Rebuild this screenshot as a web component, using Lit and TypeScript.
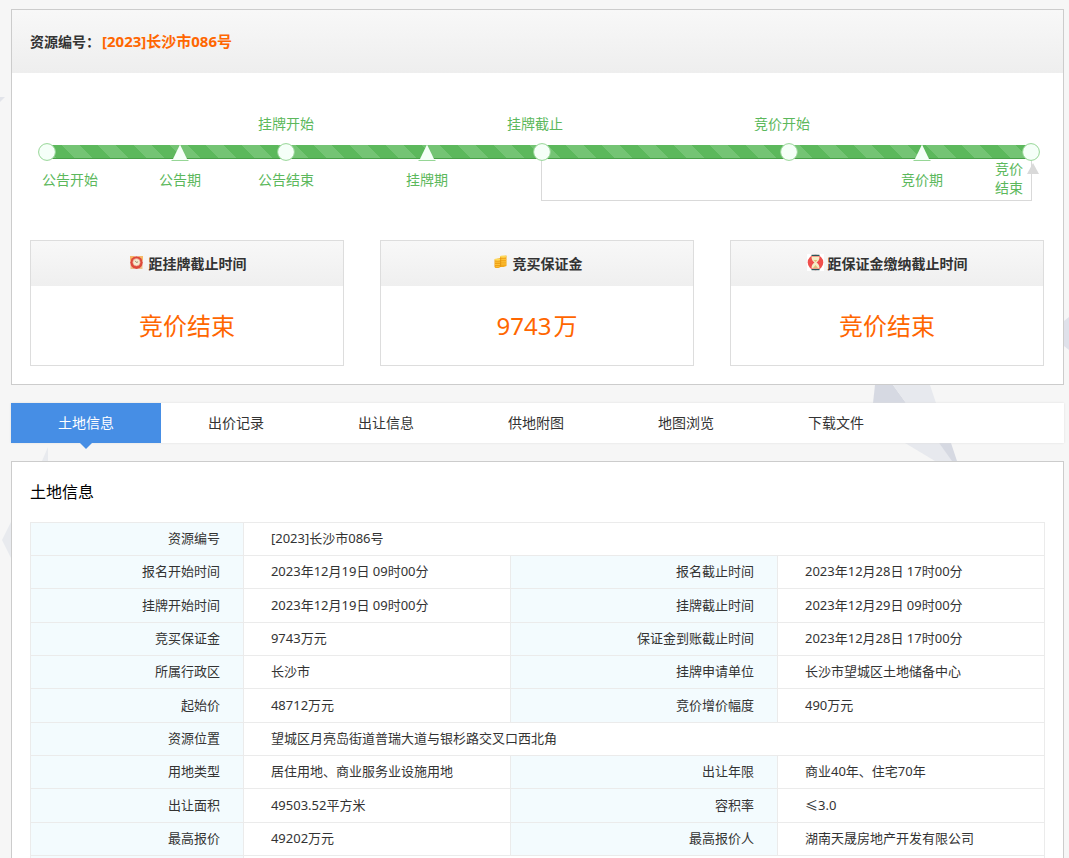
import { LitElement, html, css, svg, nothing } from "lit";
import { customElement, state } from "lit/decorators.js";
import { classMap } from "lit/directives/class-map.js";

interface Stage {
  shape: "dot" | "peak";
  above?: string;
  below?: string;
  align: "start" | "middle" | "lean" | "end";
}

const STAGES: Stage[] = [
  { shape: "dot", below: "公告开始", align: "start" },
  { shape: "peak", below: "公告期", align: "middle" },
  { shape: "dot", above: "挂牌开始", below: "公告结束", align: "middle" },
  { shape: "peak", below: "挂牌期", align: "middle" },
  { shape: "dot", above: "挂牌截止", align: "lean" },
  { shape: "dot", above: "竞价开始", align: "lean" },
  { shape: "peak", below: "竞价期", align: "middle" },
  { shape: "dot", below: "竞价结束", align: "end" },
];

const TABS = ["土地信息", "出价记录", "出让信息", "供地附图", "地图浏览", "下载文件"];

const ROWS: string[][] = [
  ["资源编号", "[2023]长沙市086号"],
  ["报名开始时间", "2023年12月19日 09时00分", "报名截止时间", "2023年12月28日 17时00分"],
  ["挂牌开始时间", "2023年12月19日 09时00分", "挂牌截止时间", "2023年12月29日 09时00分"],
  ["竞买保证金", "9743万元", "保证金到账截止时间", "2023年12月28日 17时00分"],
  ["所属行政区", "长沙市", "挂牌申请单位", "长沙市望城区土地储备中心"],
  ["起始价", "48712万元", "竞价增价幅度", "490万元"],
  ["资源位置", "望城区月亮岛街道普瑞大道与银杉路交叉口西北角"],
  ["用地类型", "居住用地、商业服务业设施用地", "出让年限", "商业40年、住宅70年"],
  ["出让面积", "49503.52平方米", "容积率", "≤3.0"],
  ["最高报价", "49202万元", "最高报价人", "湖南天晟房地产开发有限公司"],
  ["", ""],
];

const clockIcon = svg`
  <path d="M2 2h4.500v4.500H2zM10.500 2H15v4.500h-4.500z" fill="#f6b968"/>
  <path d="M2.500 11h3.500v4H2.500zM11 11h3.500v4H11z" fill="#efc08c"/>
  <circle cx="8.500" cy="8.600" r="6.300" fill="#dd4a3a"/>
  <circle cx="8.500" cy="8.300" r="3.700" fill="#f6ecd0" stroke="#e98a78" stroke-width=".6"/>
  <path d="M7.200 6.800l1.300 1.700 1.600-.7" fill="none" stroke="#8b8268" stroke-width=".9"/>`;

const coinsIcon = svg`
  <path d="M8 2.500l6.500-1V12l-3 1H8z" fill="#f3a81b"/>
  <path d="M2.500 5.500l6-1.500v9l-2 1h-3l-1-1z" fill="#efa015"/>
  <ellipse cx="11.300" cy="2.600" rx="3.200" ry="1.200" fill="#ffd95a"/>
  <ellipse cx="5.500" cy="5.600" rx="3" ry="1.200" fill="#ffd95a"/>
  <path d="M3 8.200h5M3 10.500h5M3.500 12.700h4M9.200 5.500h5M9.200 7.800h5M9.200 10h5" stroke="#fcc23a" stroke-width="1"/>
  <path d="M8.600 4v9" stroke="#d98f14" stroke-width=".5"/>`;

const hourglassIcon = svg`
  <path d="M0 0h17v17H0z" fill="#fff"/>
  <circle cx="8.500" cy="8.500" r="7.800" fill="#f04f4c"/>
  <path d="M4.500 2.500h8c0 3.500-1.200 4.700-3 6 1.800 1.300 3 2.500 3 6h-8c0-3.500 1.200-4.700 3-6-1.800-1.300-3-2.500-3-6z" fill="#f5edc6"/>
  <path d="M6.500 6h4L8.500 8zM8.500 11l2.500 3h-5z" fill="#dcc07a"/>
  <path d="M4.500 1.300h8M4.500 15.700h8" stroke="#2c5658" stroke-width="1.200"/>`;

const CARDS = [
  { title: "距挂牌截止时间", value: "竞价结束", icon: clockIcon },
  { title: "竞买保证金", value: "9743", unit: "万", icon: coinsIcon },
  { title: "距保证金缴纳截止时间", value: "竞价结束", icon: hourglassIcon },
];

@customElement("auction-timeline")
class AuctionTimeline extends LitElement {
  static styles = css`
    :host {
      display: block;
    }
    .track {
      display: grid;
      grid-template-columns: 133fr 106fr 141fr 115fr 247fr 133fr 109fr 0;
      grid-template-rows: 20px 36px 31px;
      padding: 0 13px 0 17px;
      color: #5cb85c;
      font-size: 14px;
      line-height: 20px;
      white-space: nowrap;
    }
    .bar {
      grid-area: 2 / 1 / 3 / 9;
      align-self: center;
      height: 14px;
      background: #5cb85c
        linear-gradient(45deg, #74c474 25%, transparent 25% 50%, #74c474 50% 75%, transparent 75%)
        14px 0 / 36px 36px;
      box-shadow: inset 0 -1px 0 #48a048;
    }
    .bracket {
      grid-area: 2 / 5 / 4 / 8;
      margin: 18px -1px 0 -1px;
      border: 1px solid #d9d9d9;
      border-top: 0;
    }
    .arrow {
      grid-area: 3 / 8;
      justify-self: start;
      width: 12px;
      height: 11px;
      margin: -7px 0 0 -4px;
      background: #d9d9d9;
      clip-path: polygon(50% 0, 100% 100%, 0 100%);
    }
    .marker {
      grid-row: 2;
      place-self: center start;
      width: 18px;
      height: 18px;
      transform: translateX(-50%);
    }
    .label {
      justify-self: start;
      align-self: start;
    }
    .above {
      grid-row: 1;
    }
    .below {
      grid-row: 3;
    }
    .start {
      margin-left: -5px;
    }
    .middle {
      transform: translateX(-50%);
    }
    .lean {
      transform: translateX(calc(-50% - 7px));
    }
    .end {
      width: 28px;
      margin: -11px 0 0 -36px;
      line-height: 19px;
      white-space: normal;
    }
  `;

  render() {
    return html`
      <div class="track">
        <div class="bracket"></div>
        <div class="bar"></div>
        <div class="arrow"></div>
        ${STAGES.map((s, i) => {
          const column = `grid-column:${i + 1}`;
          return html`
            ${s.above ? html`<span class="label above ${s.align}" style=${column}>${s.above}</span>` : nothing}
            <svg class="marker" style=${column} viewBox="0 0 18 18" aria-hidden="true">
              ${s.shape === "dot"
                ? svg`<circle cx="9" cy="9" r="8.400" fill="#f5fff8" stroke="#96d696"/>`
                : svg`<path d="M9 1.500L17 18H1z" fill="#f5fff8"/><path d="M.5 17.500h17" stroke="#96d696"/>`}
            </svg>
            ${s.below ? html`<span class="label below ${s.align}" style=${column}>${s.below}</span>` : nothing}
          `;
        })}
      </div>
    `;
  }
}

@customElement("app-root")
class AppRoot extends LitElement {
  @state() private active = 0;

  static styles = css`
    :host {
      display: block;
      position: relative;
      height: 100vh;
      overflow: hidden;
      background: #f6f6f6;
      color: #333;
      font-family: "Noto Sans", "Noto Sans CJK SC", sans-serif;
      font-size: 14px;
    }
    .backdrop {
      position: absolute;
      inset: 0;
      width: 100%;
      height: 100%;
    }
    .page {
      position: relative;
      display: flex;
      flex-direction: column;
      gap: 18px;
      padding: 9px 5px 0 11px;
    }
    .panel {
      background: #fff;
      border: 1px solid #ccc;
    }
    .heading {
      display: flex;
      box-sizing: border-box;
      align-items: center;
      gap: 2px;
      height: 63px;
      margin: 0;
      padding: 0 18px 2px;
      font-size: 14px;
      font-weight: bold;
      background: linear-gradient(#f8f8f8, #eee);
    }
    .number {
      color: #f60;
      font-size: 15px;
    }
    .overview {
      padding: 41px 19px 18px 18px;
    }
    .cards {
      display: grid;
      grid-template-columns: repeat(3, 1fr);
      gap: 36px;
      margin-top: 39px;
    }
    .card {
      border: 1px solid #ddd;
      text-align: center;
    }
    .title {
      display: flex;
      box-sizing: border-box;
      align-items: center;
      justify-content: center;
      gap: 4px;
      height: 45px;
      margin: 0;
      padding-bottom: 2px;
      font-size: 14px;
      background: linear-gradient(#f8f8f8, #efefef);
    }
    .icon {
      width: 17px;
      height: 17px;
    }
    .value {
      display: flex;
      justify-content: center;
      gap: 2px;
      margin: 0;
      color: #f60;
      font-size: 24px;
      line-height: 79px;
    }
    .tabs {
      display: flex;
      height: 40px;
      background: #fff;
      box-shadow: 0 0 2px #ddd;
    }
    .tab {
      position: relative;
      width: 150px;
      padding: 0 0 2px;
      border: 0;
      background: none;
      color: #333;
      font: inherit;
      cursor: pointer;
    }
    .tab.active {
      background: #468ee5;
      color: #fff;
    }
    .tab.active::after {
      content: "";
      position: absolute;
      top: 100%;
      left: calc(50% - 6px);
      border: 6px solid transparent;
      border-top-color: #468ee5;
    }
    .details {
      padding: 18px 18px 0;
    }
    .section {
      margin: 0 0 18px;
      color: #000;
      font-size: 16px;
      font-weight: normal;
      line-height: 24px;
    }
    .info {
      width: 100%;
      border-collapse: collapse;
      table-layout: fixed;
      font-size: 13px;
      line-height: 20px;
    }
    .key-col {
      width: 21%;
    }
    .row {
      height: 33px;
    }
    .row:nth-child(3n) {
      height: 34px;
    }
    .key,
    .cell {
      padding: 0 0 2px;
      border: 1px solid #ebebeb;
      font-weight: normal;
    }
    .key {
      padding-right: 23px;
      background: #f3fbfe;
      text-align: right;
    }
    .cell {
      padding-left: 27px;
    }
  `;

  render() {
    return html`
      <svg class="backdrop" aria-hidden="true">
        <path d="M0 97h5l-5 5z" fill="#e2e4ea" />
        <path d="M2 540l9-18v36zM42 461l6-14v14z" fill="#e8eaee" />
        <path d="M875 385h18l13 18h-33z" fill="#d6d9e2" />
        <path d="M893 385h37l6 18h-30z" fill="#e7e9ee" />
        <path d="M905 443h34l14 18h-18z" fill="#e7e9ee" />
        <path d="M939 443h12l6 18h-5z" fill="#d6d9e2" />
        <path d="M1064 321l5-4v33l-5-4z" fill="#dfe1ea" />
      </svg>
      <main class="page">
        <section class="panel">
          <h1 class="heading"><span>资源编号：</span><span class="number">[2023]长沙市086号</span></h1>
          <div class="overview">
            <auction-timeline></auction-timeline>
            <div class="cards">
              ${CARDS.map(
                (c) => html`
                  <article class="card">
                    <h2 class="title">
                      <svg class="icon" viewBox="0 0 17 17" aria-hidden="true">${c.icon}</svg>
                      <span>${c.title}</span>
                    </h2>
                    <p class="value"><span>${c.value}</span>${c.unit ? html`<span>${c.unit}</span>` : nothing}</p>
                  </article>
                `
              )}
            </div>
          </div>
        </section>
        <nav class="tabs">
          ${TABS.map(
            (t, i) => html`
              <button
                type="button"
                class=${classMap({ tab: true, active: i === this.active })}
                @click=${() => (this.active = i)}
              >${t}</button>
            `
          )}
        </nav>
        <section class="panel details">
          <h2 class="section">土地信息</h2>
          <table class="info">
            <colgroup>
              <col class="key-col" /><col /><col /><col />
            </colgroup>
            <tbody>
              ${ROWS.map(
                (r) => html`
                  <tr class="row">
                    <th class="key" scope="row">${r[0]}</th>
                    <td class="cell" colspan=${r.length === 2 ? 3 : 1}>${r[1]}</td>
                    ${r.length > 2
                      ? html`<th class="key" scope="row">${r[2]}</th><td class="cell">${r[3]}</td>`
                      : nothing}
                  </tr>
                `
              )}
            </tbody>
          </table>
        </section>
      </main>
    `;
  }
}
